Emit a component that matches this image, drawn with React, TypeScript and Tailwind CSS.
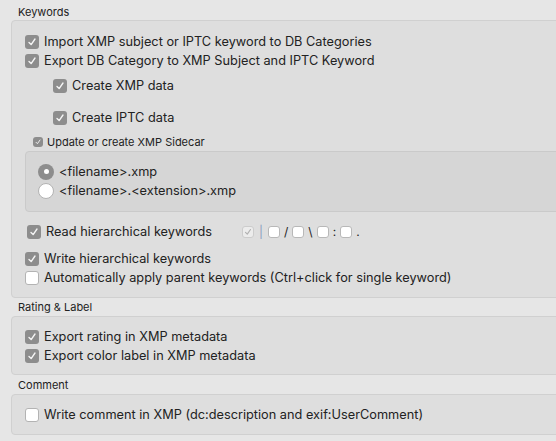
import React from 'react'

function Check({ on, size = 14 }: { on?: boolean; size?: number }) {
  if (on) {
    return (
      <span
        className="flex shrink-0 items-center justify-center rounded-[3px] bg-[#8d8d8d]"
        style={{ width: size, height: size }}
      >
        <svg viewBox="0 0 14 14" width={size - 2} height={size - 2}>
          <polyline points="3.5,7.5 6,10 10.5,3.5" fill="none" stroke="#f4f4f4" strokeWidth="1.6" strokeLinecap="round" strokeLinejoin="round" />
        </svg>
      </span>
    )
  }
  return (
    <span
      className="block shrink-0 rounded-[3px] border border-[#b3b3b3] bg-white"
      style={{ width: size, height: size }}
    />
  )
}

function Row({ on, children, className = '' }: { on?: boolean; children: React.ReactNode; className?: string }) {
  return (
    <div className={`flex h-[19px] items-center gap-[5px] ${className}`}>
      <Check on={on} />
      <span>{children}</span>
    </div>
  )
}

function Radio({ on, children }: { on?: boolean; children: React.ReactNode }) {
  return (
    <div className="flex h-[19px] items-center gap-[5px] pl-[12px]">
      {on ? (
        <span className="flex h-[16px] w-[16px] items-center justify-center rounded-full bg-[#8d8d8d]">
          <span className="h-[5px] w-[5px] rounded-full bg-white" />
        </span>
      ) : (
        <span className="block h-[16px] w-[16px] rounded-full border border-[#b3b3b3] bg-white" />
      )}
      <span>{children}</span>
    </div>
  )
}

function Mini() {
  return <span className="block h-[12px] w-[12px] rounded-[3px] border border-[#b8b8b8] bg-white" />
}

export default function App() {
  return (
    <div
      className="h-[441px] w-[556px] overflow-hidden bg-[#e6e6e6] pl-[11px] pt-[4px] text-[12.75px] text-[#222]"
      style={{ fontFamily: 'Inter, "Liberation Sans", Arial, sans-serif' }}
    >
      {/* Keywords */}
      <div className="h-[16px] pl-[7px] text-[11px] leading-[16px]">Keywords</div>
      <div className="w-[560px] rounded-[4px] border border-[#d0d0d0] bg-[#dedede] pb-[10px] pt-[11px]">
        <div className="pl-[13px]">
          <Row on>Import XMP subject or IPTC keyword to DB Categories</Row>
          <Row on>Export DB Category to XMP Subject and IPTC Keyword</Row>
          <Row on className="mt-[6px] pl-[28px]">Create XMP data</Row>
          <Row on className="mt-[13px] pl-[28px]">Create IPTC data</Row>
          <div className="mt-[6px] flex h-[18px] items-center gap-[4px] pl-[8px] text-[11px]">
            <Check on size={10} />
            <span>Update or create XMP Sidecar</span>
          </div>
        </div>
        <div className="ml-[13px] rounded-l-[4px] border border-[#cacaca] bg-[#d6d6d6] pb-[11px] pt-[10px]">
          <Radio on>&lt;filename&gt;.xmp</Radio>
          <Radio>&lt;filename&gt;.&lt;extension&gt;.xmp</Radio>
        </div>
        <div className="pl-[13px]">
          <div className="mt-[10px] flex h-[19px] items-center">
            <div className="flex w-[217px] items-center gap-[5px] pl-[2px]">
              <Check on />
              <span>Read hierarchical keywords</span>
            </div>
            <div className="flex items-center gap-[4px] text-[12px]">
              <span className="flex h-[12px] w-[12px] items-center justify-center rounded-[3px] border border-[#cccccc] bg-[#ececec]">
                <svg viewBox="0 0 14 14" width="10" height="10">
                  <polyline points="3.5,7.5 6,10 10.5,3.5" fill="none" stroke="#b0b0b0" strokeWidth="1.6" strokeLinecap="round" strokeLinejoin="round" />
                </svg>
              </span>
              <span className="px-[1px] text-[#8aa0c0]">|</span>
              <Mini />
              <span>/</span>
              <Mini />
              <span>\</span>
              <Mini />
              <span>:</span>
              <Mini />
              <span>.</span>
            </div>
          </div>
          <Row on className="mt-[8px]">Write hierarchical keywords</Row>
          <Row>Automatically apply parent keywords (Ctrl+click for single keyword)</Row>
        </div>
      </div>

      {/* Rating & Label */}
      <div className="h-[18px] pl-[7px] text-[11px] leading-[19px]">Rating &amp; Label</div>
      <div className="w-[560px] rounded-[4px] border border-[#d0d0d0] bg-[#dedede] pb-[9px] pl-[13px] pt-[10px]">
        <Row on>Export rating in XMP metadata</Row>
        <Row on>Export color label in XMP metadata</Row>
      </div>

      {/* Comment */}
      <div className="h-[19px] pl-[7px] text-[11px] leading-[20px]">Comment</div>
      <div className="w-[560px] rounded-[4px] border border-[#d0d0d0] bg-[#dedede] pb-[10px] pl-[13px] pt-[10px]">
        <Row>Write comment in XMP (dc:description and exif:UserComment)</Row>
      </div>
    </div>
  )
}
